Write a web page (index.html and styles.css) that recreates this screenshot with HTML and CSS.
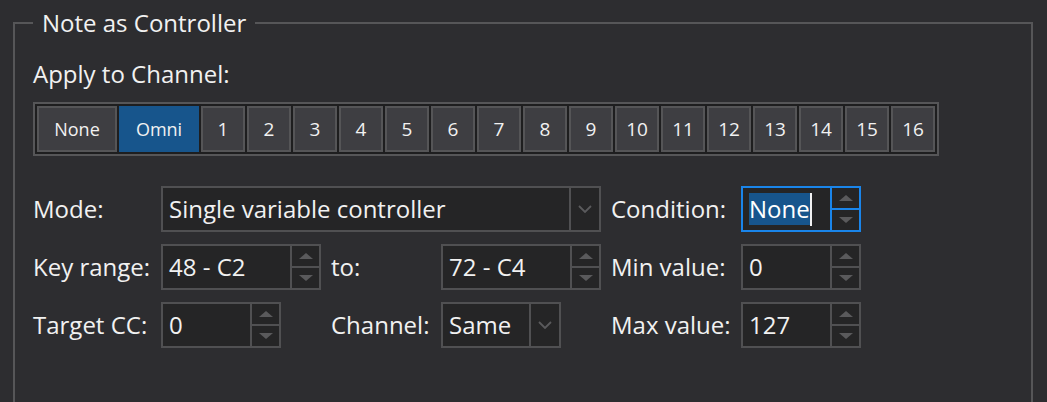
FILE: index.html
```html
<!DOCTYPE html>
<html lang="en">
<head>
<meta charset="utf-8">
<title>Note as Controller</title>
<link rel="stylesheet" href="styles.css">
</head>
<body>
<fieldset class="group">
  <legend class="group-title">Note as Controller</legend>
  <div class="section-label">Apply to Channel:</div>
  <div class="channels">
    <button class="ch ch-wide">None</button>
    <button class="ch ch-wide is-active">Omni</button>
    <button class="ch">1</button>
    <button class="ch">2</button>
    <button class="ch">3</button>
    <button class="ch">4</button>
    <button class="ch">5</button>
    <button class="ch">6</button>
    <button class="ch">7</button>
    <button class="ch">8</button>
    <button class="ch">9</button>
    <button class="ch">10</button>
    <button class="ch">11</button>
    <button class="ch">12</button>
    <button class="ch">13</button>
    <button class="ch">14</button>
    <button class="ch">15</button>
    <button class="ch">16</button>
  </div>

  <div class="form">
    <div class="lbl">Mode:</div>
    <div class="combo combo-mode">
      <div class="field-val">Single variable controller</div>
      <div class="combo-btn"><svg class="chev" width="14" height="8" viewBox="0 0 14 8"><polyline points="1,1 7,7 13,1" fill="none" stroke="#5a5a5c" stroke-width="1.8"/></svg></div>
    </div>
    <div class="lbl lbl-pad">Condition:</div>
    <div class="spin is-focused">
      <div class="field-val"><span class="sel">None</span><span class="caret"></span></div>
      <div class="spin-btns">
        <div class="spin-btn"><svg width="14" height="6" viewBox="0 0 14 6"><polygon points="0,6 7,0 14,6" fill="#5a5a5c"/></svg></div>
        <div class="spin-btn"><svg width="14" height="6" viewBox="0 0 14 6"><polygon points="0,0 14,0 7,6" fill="#5a5a5c"/></svg></div>
      </div>
    </div>

    <div class="lbl">Key range:</div>
    <div class="spin">
      <div class="field-val">48 - C2</div>
      <div class="spin-btns">
        <div class="spin-btn"><svg width="14" height="6" viewBox="0 0 14 6"><polygon points="0,6 7,0 14,6" fill="#5a5a5c"/></svg></div>
        <div class="spin-btn"><svg width="14" height="6" viewBox="0 0 14 6"><polygon points="0,0 14,0 7,6" fill="#5a5a5c"/></svg></div>
      </div>
    </div>
    <div class="lbl lbl-pad">to:</div>
    <div class="spin">
      <div class="field-val">72 - C4</div>
      <div class="spin-btns">
        <div class="spin-btn"><svg width="14" height="6" viewBox="0 0 14 6"><polygon points="0,6 7,0 14,6" fill="#5a5a5c"/></svg></div>
        <div class="spin-btn"><svg width="14" height="6" viewBox="0 0 14 6"><polygon points="0,0 14,0 7,6" fill="#5a5a5c"/></svg></div>
      </div>
    </div>
    <div class="lbl lbl-pad">Min value:</div>
    <div class="spin">
      <div class="field-val">0</div>
      <div class="spin-btns">
        <div class="spin-btn"><svg width="14" height="6" viewBox="0 0 14 6"><polygon points="0,6 7,0 14,6" fill="#5a5a5c"/></svg></div>
        <div class="spin-btn"><svg width="14" height="6" viewBox="0 0 14 6"><polygon points="0,0 14,0 7,6" fill="#5a5a5c"/></svg></div>
      </div>
    </div>

    <div class="lbl">Target CC:</div>
    <div class="spin spin-short">
      <div class="field-val">0</div>
      <div class="spin-btns">
        <div class="spin-btn"><svg width="14" height="6" viewBox="0 0 14 6"><polygon points="0,6 7,0 14,6" fill="#5a5a5c"/></svg></div>
        <div class="spin-btn"><svg width="14" height="6" viewBox="0 0 14 6"><polygon points="0,0 14,0 7,6" fill="#5a5a5c"/></svg></div>
      </div>
    </div>
    <div class="lbl lbl-pad">Channel:</div>
    <div class="combo combo-short">
      <div class="field-val">Same</div>
      <div class="combo-btn"><svg class="chev" width="14" height="8" viewBox="0 0 14 8"><polyline points="1,1 7,7 13,1" fill="none" stroke="#5a5a5c" stroke-width="1.8"/></svg></div>
    </div>
    <div class="lbl lbl-pad">Max value:</div>
    <div class="spin">
      <div class="field-val">127</div>
      <div class="spin-btns">
        <div class="spin-btn"><svg width="14" height="6" viewBox="0 0 14 6"><polygon points="0,6 7,0 14,6" fill="#5a5a5c"/></svg></div>
        <div class="spin-btn"><svg width="14" height="6" viewBox="0 0 14 6"><polygon points="0,0 14,0 7,6" fill="#5a5a5c"/></svg></div>
      </div>
    </div>
  </div>
</fieldset>
</body>
</html>
```

FILE: styles.css
```css
* {
  box-sizing: border-box;
}

html,
body {
  margin: 0;
}

body {
  display: flex;
  flex-direction: column;
  height: 402px;
  overflow: hidden;
  padding: 7px 14px 0 13px;
  background: #2d2d30;
  color: #f1f1f1;
  font-family: "Open Sans", "Noto Sans", sans-serif;
  font-size: 24px;
  line-height: 32px;
}

.group {
  flex: 1;
  min-width: 0;
  margin: 0;
  padding: 19px 18px 0 18px;
  border: 2px solid #565658;
  border-bottom: none;
}

.group-title {
  padding: 0 9px;
  font-size: 24px;
  line-height: 32px;
}

.section-label {
  height: 32px;
}

.channels {
  display: flex;
  gap: 2px;
  width: 906px;
  margin-top: 12px;
  padding: 2px;
  border: 2px solid #565658;
  background: #1e1e1f;
}

.ch {
  width: 44px;
  height: 46px;
  padding: 0;
  border: 2px solid #555557;
  background: #3e3e42;
  color: #f1f1f1;
  font-family: inherit;
  font-size: 19px;
  line-height: 1;
}

.ch-wide {
  width: 80px;
  font-size: 18px;
}

.ch.is-active {
  background: #17558c;
  border-color: #17558c;
}

.form {
  display: grid;
  grid-template-columns: 128px 160px 120px 160px 140px 120px;
  grid-auto-rows: 46px;
  row-gap: 12px;
  margin-top: 30px;
}

.lbl {
  display: flex;
  align-items: center;
  white-space: nowrap;
}

.lbl-pad {
  padding-left: 10px;
}

.combo,
.spin {
  display: flex;
  border: 2px solid #505052;
  background: #252526;
}

.combo-mode {
  grid-column: 2 / 5;
}

.combo-short,
.spin-short {
  width: 120px;
}

.field-val {
  flex: 1;
  display: flex;
  align-items: center;
  min-width: 0;
  padding-left: 6px;
  white-space: nowrap;
  overflow: hidden;
}

.combo-btn {
  display: flex;
  align-items: center;
  justify-content: center;
  width: 30px;
  border-left: 2px solid #505052;
}

.spin-btns {
  display: flex;
  flex-direction: column;
  width: 29px;
  border-left: 2px solid #505052;
}

.spin-btn {
  flex: 1;
  display: flex;
  align-items: center;
  justify-content: center;
}

.spin-btn + .spin-btn {
  border-top: 2px solid #505052;
}

.spin.is-focused,
.spin.is-focused .spin-btns,
.spin.is-focused .spin-btn + .spin-btn {
  border-color: #1a85ea;
}

.sel {
  background: #17558c;
  color: #ffffff;
}

.caret {
  width: 2px;
  height: 33px;
  background: #f1f1f1;
}
```
